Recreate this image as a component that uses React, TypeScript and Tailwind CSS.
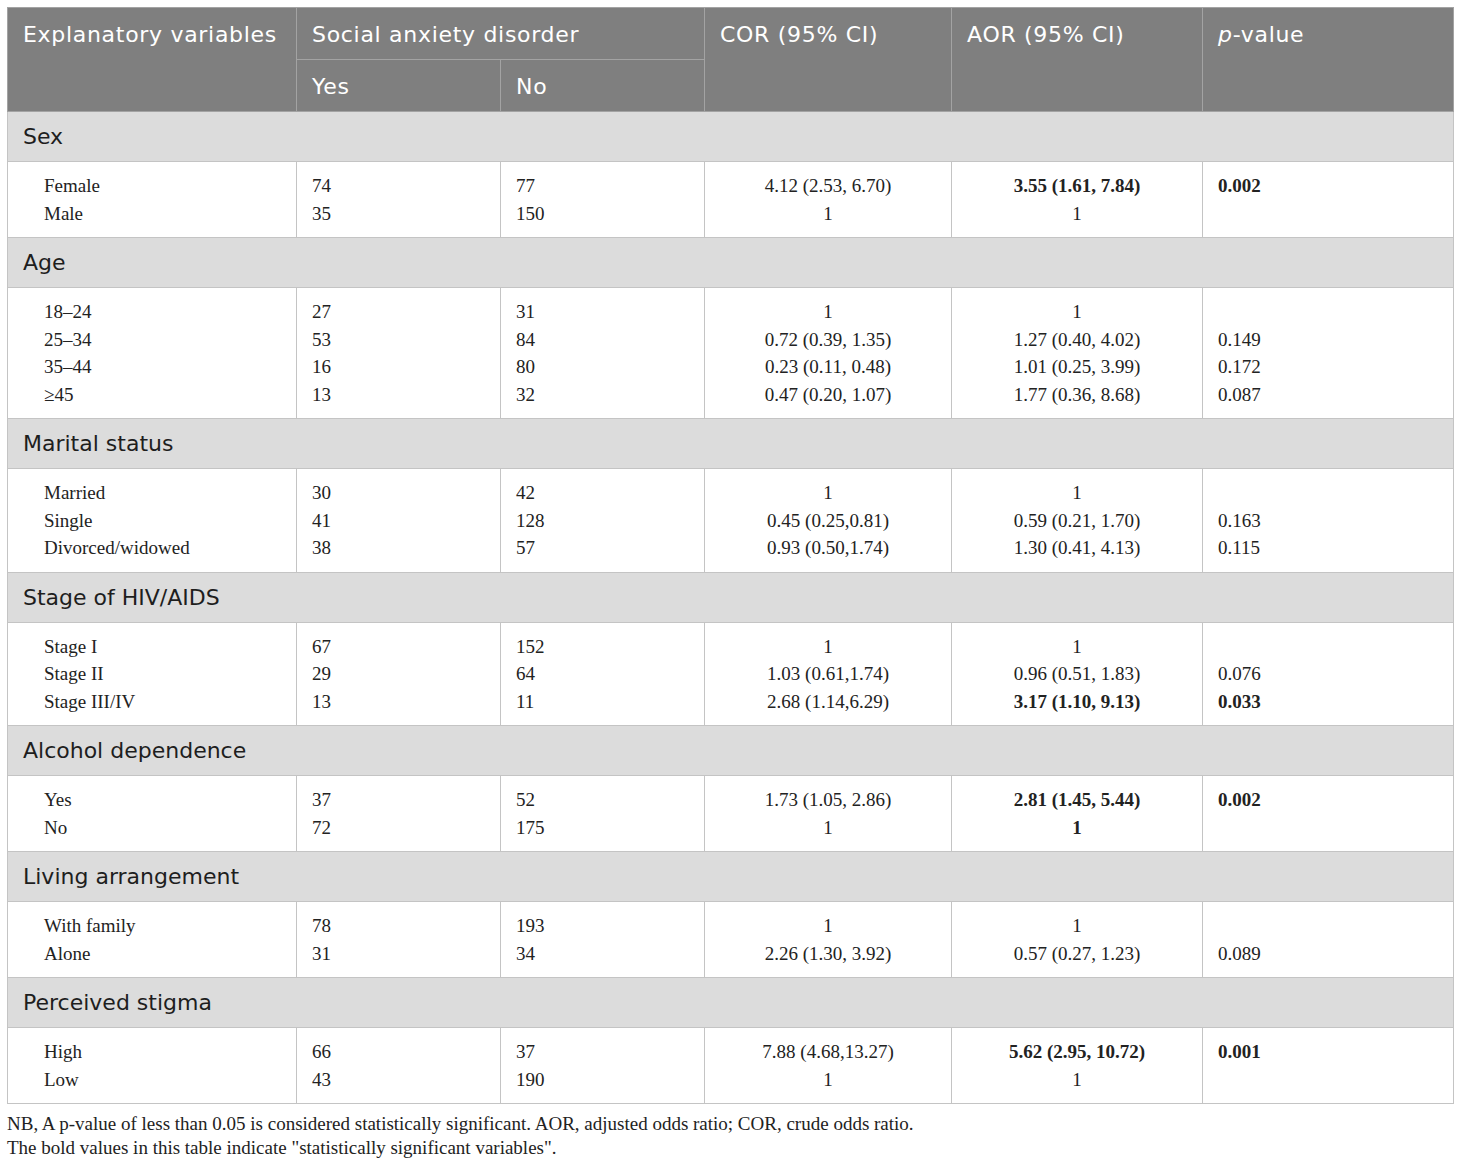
type Line = { label: string; yes: string; no: string; cor: string; aor: string; p: string; boldAor?: boolean; boldP?: boolean };
type Group = { title: string; lines: Line[] };

const GROUPS: Group[] = [
  {
    title: "Sex",
    lines: [
      { label: "Female", yes: "74", no: "77", cor: "4.12 (2.53, 6.70)", aor: "3.55 (1.61, 7.84)", p: "0.002", boldAor: true, boldP: true },
      { label: "Male", yes: "35", no: "150", cor: "1", aor: "1", p: "" },
    ],
  },
  {
    title: "Age",
    lines: [
      { label: "18–24", yes: "27", no: "31", cor: "1", aor: "1", p: "" },
      { label: "25–34", yes: "53", no: "84", cor: "0.72 (0.39, 1.35)", aor: "1.27 (0.40, 4.02)", p: "0.149" },
      { label: "35–44", yes: "16", no: "80", cor: "0.23 (0.11, 0.48)", aor: "1.01 (0.25, 3.99)", p: "0.172" },
      { label: "≥45", yes: "13", no: "32", cor: "0.47 (0.20, 1.07)", aor: "1.77 (0.36, 8.68)", p: "0.087" },
    ],
  },
  {
    title: "Marital status",
    lines: [
      { label: "Married", yes: "30", no: "42", cor: "1", aor: "1", p: "" },
      { label: "Single", yes: "41", no: "128", cor: "0.45 (0.25,0.81)", aor: "0.59 (0.21, 1.70)", p: "0.163" },
      { label: "Divorced/widowed", yes: "38", no: "57", cor: "0.93 (0.50,1.74)", aor: "1.30 (0.41, 4.13)", p: "0.115" },
    ],
  },
  {
    title: "Stage of HIV/AIDS",
    lines: [
      { label: "Stage I", yes: "67", no: "152", cor: "1", aor: "1", p: "" },
      { label: "Stage II", yes: "29", no: "64", cor: "1.03 (0.61,1.74)", aor: "0.96 (0.51, 1.83)", p: "0.076" },
      { label: "Stage III/IV", yes: "13", no: "11", cor: "2.68 (1.14,6.29)", aor: "3.17 (1.10, 9.13)", p: "0.033", boldAor: true, boldP: true },
    ],
  },
  {
    title: "Alcohol dependence",
    lines: [
      { label: "Yes", yes: "37", no: "52", cor: "1.73 (1.05, 2.86)", aor: "2.81 (1.45, 5.44)", p: "0.002", boldAor: true, boldP: true },
      { label: "No", yes: "72", no: "175", cor: "1", aor: "1", p: "", boldAor: true },
    ],
  },
  {
    title: "Living arrangement",
    lines: [
      { label: "With family", yes: "78", no: "193", cor: "1", aor: "1", p: "" },
      { label: "Alone", yes: "31", no: "34", cor: "2.26 (1.30, 3.92)", aor: "0.57 (0.27, 1.23)", p: "0.089" },
    ],
  },
  {
    title: "Perceived stigma",
    lines: [
      { label: "High", yes: "66", no: "37", cor: "7.88 (4.68,13.27)", aor: "5.62 (2.95, 10.72)", p: "0.001", boldAor: true, boldP: true },
      { label: "Low", yes: "43", no: "190", cor: "1", aor: "1", p: "" },
    ],
  },
];

const serif = "font-['Liberation_Serif',serif]";
const sans = "font-['DejaVu_Sans',sans-serif]";

function Cell({ items, align, indent }: { items: { text: string; bold?: boolean }[]; align: "left" | "center"; indent?: boolean }) {
  return (
    <td className={`border border-[#c4c4c4] align-top py-[10px] ${indent ? "pl-[36px]" : "pl-[15px]"} pr-[15px]`}>
      {items.map((item, i) => (
        <div
          key={i}
          className={`h-[27.5px] leading-[27.5px] whitespace-nowrap ${align === "center" ? "text-center" : "text-left"} ${item.bold ? "font-bold" : ""}`}
        >
          {item.text || "\u00a0"}
        </div>
      ))}
    </td>
  );
}

const headCell = "border border-[#a3a3a3] align-top text-left font-normal px-[15px] pt-[10px]";

export default function App() {
  return (
    <div className="bg-white w-[1460px] min-h-[1164px] pt-[7px] pl-[7px]">
      <table className="table-fixed border-collapse w-[1446px] text-[#222]">
        <colgroup>
          <col className="w-[289px]" />
          <col className="w-[204px]" />
          <col className="w-[204px]" />
          <col className="w-[247px]" />
          <col className="w-[251px]" />
          <col className="w-[251px]" />
        </colgroup>
        <thead className={`${sans} text-[22px] tracking-[0.7px] text-white bg-[#7f7f7f]`}>
          <tr className="h-[52px]">
            <th rowSpan={2} className={headCell}>Explanatory variables</th>
            <th colSpan={2} className={headCell}>Social anxiety disorder</th>
            <th rowSpan={2} className={headCell}>COR (95% CI)</th>
            <th rowSpan={2} className={headCell}>AOR (95% CI)</th>
            <th rowSpan={2} className={headCell}>
              <i>p</i>-value
            </th>
          </tr>
          <tr className="h-[52px]">
            <th className={headCell}>Yes</th>
            <th className={headCell}>No</th>
          </tr>
        </thead>
        <tbody>
          {GROUPS.flatMap((g) => [
            <tr key={g.title + "-h"} className="h-[50px] bg-[#dcdcdc]">
              <td colSpan={6} className={`${sans} text-[22px] text-[#1e1e1e] border border-[#c4c4c4] px-[15px]`}>
                {g.title}
              </td>
            </tr>,
            <tr key={g.title + "-d"} className={`${serif} text-[19px] text-[#222]`}>
              <Cell indent align="left" items={g.lines.map((l) => ({ text: l.label }))} />
              <Cell align="left" items={g.lines.map((l) => ({ text: l.yes }))} />
              <Cell align="left" items={g.lines.map((l) => ({ text: l.no }))} />
              <Cell align="center" items={g.lines.map((l) => ({ text: l.cor }))} />
              <Cell align="center" items={g.lines.map((l) => ({ text: l.aor, bold: l.boldAor }))} />
              <Cell align="left" items={g.lines.map((l) => ({ text: l.p, bold: l.boldP }))} />
            </tr>,
          ])}
        </tbody>
      </table>
      <div className={`${serif} text-[19px] leading-[24px] text-[#222] mt-[8px]`}>
        <p>NB, A p-value of less than 0.05 is considered statistically significant. AOR, adjusted odds ratio; COR, crude odds ratio.</p>
        <p>The bold values in this table indicate "statistically significant variables".</p>
      </div>
    </div>
  );
}
